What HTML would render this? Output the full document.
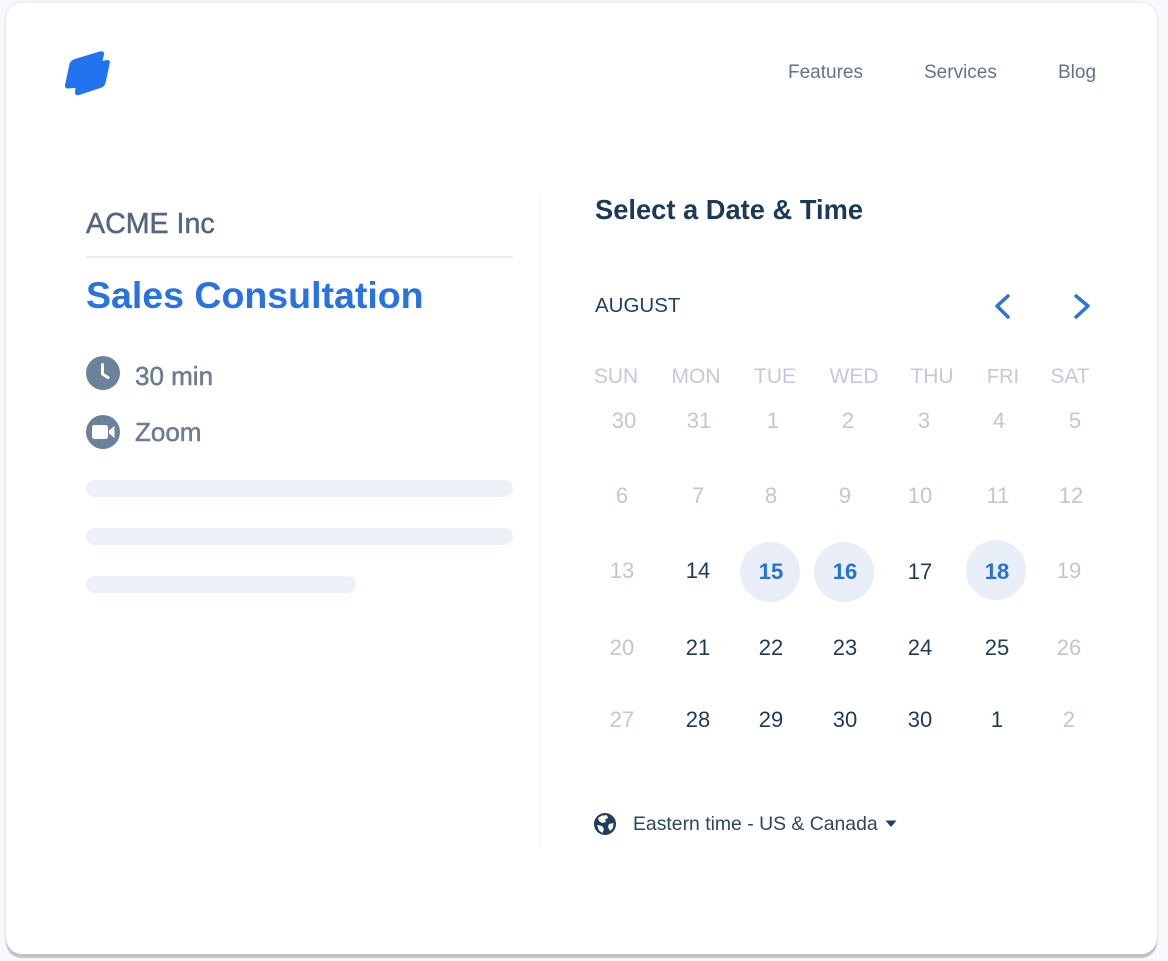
<!DOCTYPE html>
<html><head><meta charset="utf-8">
<style>
html,body{margin:0;padding:0;width:1168px;height:961px;overflow:hidden;background:#f8f9fc;font-family:"Liberation Sans",sans-serif}
.card{position:absolute;left:6px;top:3px;width:1151px;height:951px;background:#fff;border-radius:16px;box-shadow:0 4px 1px #bfc1c5,0 0 3px #d8dade}
.t{position:absolute;white-space:nowrap;line-height:1}
.c{position:absolute;white-space:nowrap;line-height:1;transform:translateX(-50%);font-size:22px;color:#c0c6d2}
.d{color:#1f3a56}
.h{position:absolute;white-space:nowrap;line-height:1;transform:translateX(-50%);font-size:21px;color:#c3c9d8}
.b{font-weight:bold;color:#2870d8}
.bar{position:absolute;left:86px;height:17px;background:#edf0f6;border-radius:9px}
.o{position:absolute;width:60px;height:60px;border-radius:50%;background:#e9eff8}
svg{position:absolute;overflow:visible}
</style></head><body>
<div class="card"></div>

<svg style="left:60px;top:45px" width="56" height="56" viewBox="0 0 56 56"><path d="M15 14L39.500 6.500Q44.500 5.500 44 9.500L42.500 16L47 15Q50.300 14.500 49.800 18L45.500 38Q44.500 41.500 41 42.800L19 50Q15 51 15 47.500L15.500 43L8 43.500Q4.500 43.500 5 40L9.500 19Q10.500 15.500 15 14Z" fill="#2173f0"/></svg>

<div class="t" style="left:788px;top:63px;font-size:19px;color:#5f758e">Features</div>
<div class="t" style="left:924px;top:63px;font-size:19px;color:#5f758e">Services</div>
<div class="t" style="left:1058px;top:63px;font-size:19px;color:#5f758e">Blog</div>

<div class="t" style="left:86px;top:210px;font-size:28.600px;color:#55677d;-webkit-text-stroke:.5px #55677d">ACME Inc</div>
<div style="position:absolute;left:86px;top:256px;width:427px;height:1.500px;background:#eaecf1"></div>
<div class="t" style="left:86px;top:277px;font-size:37.500px;font-weight:bold;color:#2872e4">Sales Consultation</div>

<svg style="left:86px;top:356px" width="34" height="34" viewBox="0 0 34 34"><circle cx="17" cy="17" r="17" fill="#6b829c"/><path d="M16.500 8.500V18L22 21.500" fill="none" stroke="#fff" stroke-width="3" stroke-linecap="round" stroke-linejoin="round"/></svg>
<div class="t" style="left:135px;top:363px;font-size:26px;color:#6b7d92;-webkit-text-stroke:.5px #6b7d92">30 min</div>
<svg style="left:86px;top:415px" width="34" height="34" viewBox="0 0 34 34"><circle cx="17" cy="17" r="17" fill="#6b829c"/><rect x="6" y="10" width="16" height="14" rx="2.500" fill="#fff"/><path d="M23 15.500L28.500 11V23L23 18.500Z" fill="#fff"/></svg>
<div class="t" style="left:135px;top:419px;font-size:26px;color:#6b7d92;-webkit-text-stroke:.5px #6b7d92">Zoom</div>

<div class="bar" style="top:480px;width:427px"></div>
<div class="bar" style="top:528px;width:427px"></div>
<div class="bar" style="top:576px;width:270px"></div>

<div style="position:absolute;left:539px;top:195px;width:1px;height:653px;background:#eef0f5"></div>

<div class="t" style="left:595px;top:196px;font-size:27.300px;font-weight:bold;color:#1c3a58">Select a Date &amp; Time</div>
<div class="t" style="left:595px;top:296px;font-size:20.500px;color:#24405e">AUGUST</div>
<svg style="left:990px;top:292px" width="110" height="28" viewBox="0 0 110 28"><path d="M18 4L7 14L18 25" fill="none" stroke="#2b74dc" stroke-width="3.500" stroke-linecap="round" stroke-linejoin="round"/><path d="M86 4L98 14L86 25" fill="none" stroke="#2b74dc" stroke-width="3.500" stroke-linecap="round" stroke-linejoin="round"/></svg>

<div class="h" style="left:616px;top:366px">SUN</div>
<div class="h" style="left:696px;top:366px">MON</div>
<div class="h" style="left:775px;top:366px">TUE</div>
<div class="h" style="left:854px;top:366px">WED</div>
<div class="h" style="left:932px;top:366px">THU</div>
<div class="h" style="left:1003px;top:367px;font-size:20px">FRI</div>
<div class="h" style="left:1070px;top:366px">SAT</div>

<div class="c" style="left:624px;top:410px">30</div>
<div class="c" style="left:699px;top:410px">31</div>
<div class="c" style="left:773px;top:410px">1</div>
<div class="c" style="left:848px;top:410px">2</div>
<div class="c" style="left:924px;top:410px">3</div>
<div class="c" style="left:999px;top:410px">4</div>
<div class="c" style="left:1075px;top:410px">5</div>

<div class="c" style="left:622px;top:485px">6</div>
<div class="c" style="left:698px;top:485px">7</div>
<div class="c" style="left:771px;top:485px">8</div>
<div class="c" style="left:845px;top:485px">9</div>
<div class="c" style="left:920px;top:485px">10</div>
<div class="c" style="left:998px;top:485px">11</div>
<div class="c" style="left:1071px;top:485px">12</div>

<div class="o" style="left:740px;top:542px"></div>
<div class="o" style="left:814px;top:542px"></div>
<div class="o" style="left:966px;top:540px"></div>
<div class="c" style="left:622px;top:560px">13</div>
<div class="c d" style="left:698px;top:560px">14</div>
<div class="c b" style="left:771px;top:561px">15</div>
<div class="c b" style="left:845px;top:561px">16</div>
<div class="c d" style="left:920px;top:561px">17</div>
<div class="c b" style="left:997px;top:561px">18</div>
<div class="c" style="left:1069px;top:560px">19</div>

<div class="c" style="left:622px;top:637px">20</div>
<div class="c d" style="left:698px;top:637px">21</div>
<div class="c d" style="left:771px;top:637px">22</div>
<div class="c d" style="left:845px;top:637px">23</div>
<div class="c d" style="left:920px;top:637px">24</div>
<div class="c d" style="left:997px;top:637px">25</div>
<div class="c" style="left:1069px;top:637px">26</div>

<div class="c" style="left:622px;top:709px">27</div>
<div class="c d" style="left:698px;top:709px">28</div>
<div class="c d" style="left:771px;top:709px">29</div>
<div class="c d" style="left:845px;top:709px">30</div>
<div class="c d" style="left:920px;top:709px">30</div>
<div class="c d" style="left:997px;top:709px">1</div>
<div class="c" style="left:1069px;top:709px">2</div>

<svg style="left:594px;top:813px" width="22" height="22" viewBox="0 0 22 22"><circle cx="11" cy="11" r="11" fill="#1f3d5c"/><path d="M8 2.500L13 2.200L14 5L11 6.500L12 9L8 10L5 8L4 5Z" fill="#fff"/><path d="M3 12L8 13L10 16L8.500 20L5 17.500Z" fill="#fff"/><path d="M15 11L19.500 10L19 15L16 18L14 14Z" fill="#fff"/></svg>
<div class="t" style="left:633px;top:815px;font-size:19.400px;color:#2c4766">Eastern time - US &amp; Canada</div>
<svg style="left:885px;top:820px" width="12" height="8" viewBox="0 0 12 8"><path d="M.5 .5H11.500L6 7Z" fill="#1f3d5c"/></svg>
</body></html>
